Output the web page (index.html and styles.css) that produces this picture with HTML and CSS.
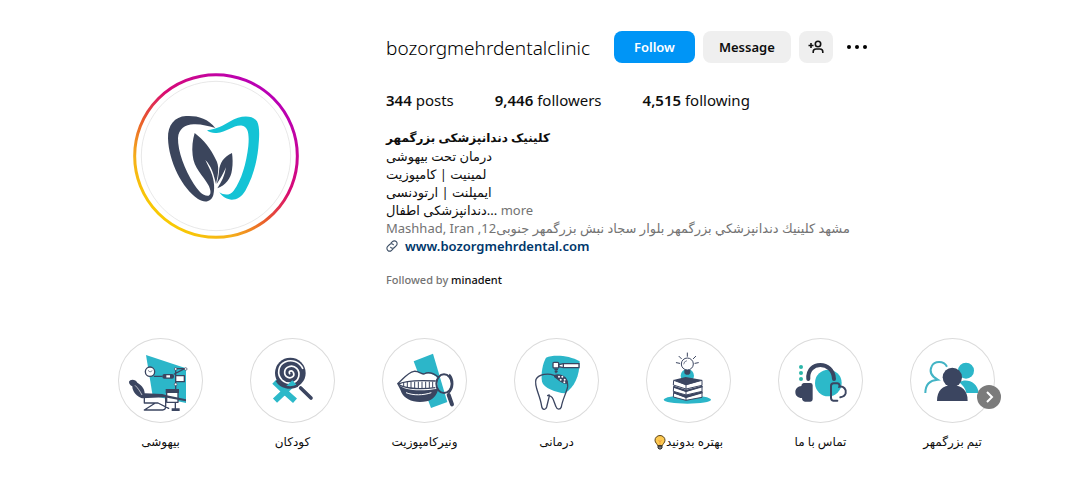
FILE: index.html
```html
<!DOCTYPE html>
<html lang="en">

<head>
	<meta charset="UTF-8">
	<meta name="viewport" content="width=device-width, initial-scale=1.0">
	<title>bozorgmehrdentalclinic</title>
	<link rel="stylesheet" href="styles.css">
</head>

<body>
	<main class="profile">
		<header class="profile__header">
			<div class="avatar">
				<svg class="avatar__image" viewBox="40 39 498 498" role="img" aria-label="Profile picture">
					<defs>
						<linearGradient id="ring" x1="0.15" y1="0.9" x2="0.8" y2="0.1">
							<stop offset="0" stop-color="#f9ce00"/>
							<stop offset="0.2" stop-color="#f5b01a"/>
							<stop offset="0.42" stop-color="#e8552e"/>
							<stop offset="0.62" stop-color="#d90b73"/>
							<stop offset="1" stop-color="#b900b4"/>
						</linearGradient>
					</defs>
					<circle cx="289" cy="288" r="244" fill="none" stroke="url(#ring)" stroke-width="9"/>
					<circle cx="289" cy="288" r="224" fill="none" stroke="#dcdcdc" stroke-width="2"/>
					<path fill="#3b455c" d="M287 204C265 174 230 166 199 168C165 170 144 195 145 235C147 305 188 386 235 417C255 430 275 426 281 405C287 380 282 350 269 325L257 300C275 318 282 342 289 372C296 340 300 318 288 298C274 266 252 240 225 219C219 240 216 262 219 286C222 325 250 346 266 375C274 390 275 404 267 407C251 410 235 391 222 371C195 329 174 273 175 234C177 207 196 194 222 193C245 192 264 198 287 204Z"/>
					<path fill="#3b455c" d="M337 279C313 289 300 310 298 333C297 348 294 360 291 372C302 357 311 341 319 322C316 344 306 366 293 385C317 376 334 356 337 329C340 311 339 294 337 279Z"/>
					<path fill="#14c3d5" d="M262 211C290 208 311 197 332 184C360 166 398 164 412 184C421 201 419 231 416 263C411 312 397 357 377 392C357 426 321 428 299 397C315 407 331 406 342 392C366 360 380 310 386 258C389 223 386 201 368 197C343 193 322 217 291 219C280 220 269 217 262 211Z"/>
				</svg>
			</div>

			<section class="info">
				<div class="info__top">
					<h1 class="username">bozorgmehrdentalclinic</h1>
					<div class="actions">
						<button type="button" class="btn btn--primary">Follow</button>
						<button type="button" class="btn">Message</button>
						<button type="button" class="btn btn--icon" aria-label="Similar accounts">
							<svg width="16" height="16" viewBox="0 0 16 16" fill="none" stroke="#111" stroke-width="1.6">
								<path d="M0.5 6.5H5.5M3 4V9"/>
								<circle cx="10" cy="5" r="2.7"/>
								<path d="M5.2 14V12.8C5.2 11 6.4 10 8 10H12C13.6 10 14.8 11 14.8 12.8V14"/>
							</svg>
						</button>
					</div>
					<button type="button" class="more-options" aria-label="Options">
						<svg width="20" height="20" viewBox="0 0 20 20" fill="#000">
							<circle cx="2" cy="10" r="2"/>
							<circle cx="10" cy="10" r="2"/>
							<circle cx="18" cy="10" r="2"/>
						</svg>
					</button>
				</div>

				<ul class="stats">
					<li><b>344</b> posts</li>
					<li><b>9,446</b> followers</li>
					<li><b>4,515</b> following</li>
				</ul>

				<div class="bio">
					<h2 class="bio__name">کلینیک دندانپزشکی بزرگمهر</h2>
					<div>درمان تحت بیهوشی</div>
					<div>لمینیت | کامپوزیت</div>
					<div>ایمپلنت | ارتودنسی</div>
					<div><bdi dir="rtl">دندانپزشکی اطفال</bdi>... <button type="button" class="bio__more">more</button></div>
					<div class="bio__address">Mashhad, Iran ,<bdi dir="rtl">مشهد كلينيك دندانپزشكي بزرگمهر بلوار سجاد نبش بزرگمهر جنوبی12</bdi></div>
					<a class="bio__link" href="#">
						<svg width="12" height="12" viewBox="0 0 12 12" fill="none" stroke="#3d4f66" stroke-width="1.1" stroke-linecap="round">
							<path d="M4.9 3.2L6.4 1.7A2.5 2.5 0 0 1 10.3 5.6L8.4 7.5A2.5 2.5 0 0 1 4.7 7.3"/>
							<path d="M7.1 8.8L5.6 10.3A2.5 2.5 0 0 1 1.7 6.4L3.6 4.5A2.5 2.5 0 0 1 7.3 4.7"/>
						</svg>
						www.bozorgmehrdental.com
					</a>
				</div>

				<p class="followed">Followed by <a href="#">minadent</a></p>
			</section>
		</header>

		<section class="highlights">
			<a class="highlight" href="#">
				<svg class="highlight__cover" viewBox="24 24 255 255">
					<path fill="#2cb6c9" d="M108 75L228 115V219L128 197Z"/>
					<circle cx="120" cy="125" r="14" fill="#fff" stroke="#3b4560" stroke-width="4"/>
					<path d="M114 121L120 126L127 122" fill="none" stroke="#3b4560" stroke-width="2"/>
					<g fill="none" stroke="#3b4560" stroke-width="4" stroke-linecap="round" stroke-linejoin="round">
						<path d="M197 177V116H224L193 132M133 139H156"/>
						<rect x="197" y="137" width="26" height="18" fill="#fff"/>
						<path d="M103 197V219H144L176 235M103 240L136 219M103 240H158Q166 240 167 231V198M196 218V238"/>
						<rect x="170" y="185" width="34" height="32" fill="#fff"/>
					</g>
					<rect x="157" y="132" width="35" height="14" rx="6" fill="#3b4560"/>
					<path d="M169 139H180" stroke="#fff" stroke-width="7"/>
					<g fill="#fff" stroke="#3b4560" stroke-width="2"><circle cx="197" cy="117" r="4"/><circle cx="227" cy="117" r="4"/><circle cx="197" cy="163" r="4"/></g>
					<path fill="#3b4560" d="M57 155C60 146 78 147 82 158C98 167 104 180 104 190L157 192L170 196L228 208V214L163 202L96 205C82 201 66 184 67 169C60 165 57 161 57 155ZM167 177H207V189H167ZM185 235H209V243H185Z"/>
					<path d="M75 166C84 174 90 184 96 195" stroke="#fff" stroke-width="2" fill="none"/>
				</svg>
				<span class="highlight__title">بیهوشی</span>
			</a>
			<a class="highlight" href="#">
				<svg class="highlight__cover" viewBox="30 24 255 255">
					<circle cx="151" cy="129" r="46" fill="#3b4560"/>
					<path d="M149 131C144 124 155 119 160 127C166 139 153 147 143 142C130 136 131 115 146 110C165 103 181 121 176 140C170 161 142 166 126 150C109 132 115 105 135 96C155 87 178 95 188 115" fill="none" stroke="#fff" stroke-width="5" stroke-linecap="round"/>
					<path d="M133 184L165 212M163 157L105 212" stroke="#2cb9c9" stroke-width="18"/>
					<path d="M103 155L140 190" stroke="#2cb9c9" stroke-width="18"/>
					<path d="M110 151C123 172 150 178 173 167" stroke="#3b4560" stroke-width="8" fill="none"/>
					<path d="M182 174L213 204" stroke="#3b4560" stroke-width="11" stroke-linecap="round"/>
				</svg>
				<span class="highlight__title">کودکان</span>
			</a>
			<a class="highlight" href="#">
				<svg class="highlight__cover" viewBox="36 24 255 255">
					<path fill="#2cb6c9" d="M131 94L189 71L232 216L183 234Z"/>
					<path fill="#fff" d="M82 162C99 149 111 128 132 124C145 122 153 132 162 132C174 127 193 132 202 145V181C170 187 114 187 82 162Z"/>
					<path fill="none" stroke="#3b4560" stroke-width="4" d="M82 162C99 149 111 128 132 124C145 122 153 132 162 132C174 125 191 130 205 141M84 163C105 151 160 151 197 153M84 163C110 178 160 178 196 173"/>
					<path stroke="#3b4560" stroke-width="3" d="M101 158V170M112 156V173M123 155V175M134 155V176M145 155V176M156 155V176M167 155V175M178 155V174M188 155V173"/>
					<path fill="#3b4560" d="M82 163C111 187 163 182 205 176C201 195 188 210 170 214C135 222 103 208 94 187C91 177 86 170 82 163Z"/>
					<path d="M108 188C130 197 160 196 184 188" fill="none" stroke="#fff" stroke-width="3"/>
					<ellipse cx="222" cy="161" rx="23" ry="28" fill="none" stroke="#3b4560" stroke-width="6"/>
					<path d="M237 134C251 149 250 176 235 188" fill="none" stroke="#3b4560" stroke-width="7"/>
					<path d="M236 195L246 223" stroke="#3b4560" stroke-width="12" stroke-linecap="round"/>
				</svg>
				<span class="highlight__title">ونیرکامپوزیت</span>
			</a>
			<a class="highlight" href="#">
				<svg class="highlight__cover" viewBox="36 24 255 255">
					<path fill="#2cb6c9" d="M132 83C155 73 202 76 233 94C233 137 217 173 189 190C162 187 124 174 120 155C116 130 122 101 132 83Z"/>
					<path fill="none" stroke="#3b4560" stroke-width="4" stroke-linecap="round" stroke-linejoin="round" d="M156 136C139 129 111 132 102 148C95 169 114 193 119 229C121 240 131 241 134 231L141 202C144 190 139 196 137 197M140 197C153 198 154 211 162 230C165 240 175 239 178 231C181 209 193 190 197 170C198 160 194 151 188 143"/>
					<path fill="#3b4560" d="M156 135C176 127 197 141 198 158C190 168 174 155 156 141Z"/>
					<g fill="#fff"><circle cx="171" cy="140" r="3"/><circle cx="181" cy="140" r="3"/><circle cx="188" cy="149" r="3"/><circle cx="176" cy="149" r="3"/><circle cx="187" cy="157" r="3"/></g>
					<g fill="#fff" stroke="#3b4560" stroke-width="4"><rect x="153" y="97" width="17" height="17" rx="3"/><path d="M171 104L184 101H231V113H184L171 110Z"/></g>
					<path stroke="#3b4560" stroke-width="4" d="M162 116V130M157 119H168M158 125H167M184 101V113"/>
				</svg>
				<span class="highlight__title">درمانی</span>
			</a>
			<a class="highlight" href="#">
				<svg class="highlight__cover" viewBox="36 24 255 255">
					<ellipse cx="160" cy="209" rx="71" ry="12" fill="#2cb6c9"/>
					<circle cx="160" cy="137" r="20" fill="#2cb6c9"/>
					<circle cx="160" cy="102" r="18" fill="#fff" stroke="#3b4560" stroke-width="3"/>
					<path d="M149 103A12 12 0 0 1 159 92" fill="none" stroke="#3b4560" stroke-width="2"/>
					<path fill="#3b4560" d="M151 120H169V130L164 134H156L151 130Z"/>
					<path stroke="#3b4560" stroke-width="3" stroke-linecap="round" d="M160 69V79M135 79L142 86M185 79L178 86M127 98L137 100M193 98L183 100"/>
					<path fill="#fff" stroke="#3b4560" stroke-width="3" stroke-linejoin="round" d="M119 188L156 202L204 187V202L156 211L118 201ZM119 170L156 184L204 169V184L156 195L118 184ZM119 151L156 164L204 151V166L156 177L118 165Z"/>
					<path fill="#3b4560" d="M118 150L155 141L206 150L156 166ZM118 167L156 179L206 167V172L156 186L118 173ZM118 184L156 196L206 184V190L156 204L118 190Z"/>
					<path stroke="#3b4560" stroke-width="3" d="M156 163V211"/>
				</svg>
				<span class="highlight__title" dir="rtl">بهتره بدونید<svg class="bulb" width="12" height="15" viewBox="0 0 12 15"><path d="M3.5 10.5C3.5 8.8 1 8 1 5.2A5 4.7 0 0 1 11 5.2C11 8 8.5 8.8 8.5 10.5Z" fill="#fdc950" stroke="#5b4216"/><path d="M4.5 5L6 7L7.5 5M6 7V10" fill="none" stroke="#f0a040"/><path d="M4 11H8V13L7 14H5L4 13Z" fill="#777" stroke="#333"/></svg></span>
			</a>
			<a class="highlight" href="#">
				<svg class="highlight__cover" viewBox="36 24 255 255">
					<circle cx="187" cy="159" r="40" fill="#2cb9c9"/>
					<g fill="#2cb6a9"><circle cx="105" cy="111" r="6"/><circle cx="105" cy="129" r="6"/><circle cx="105" cy="147" r="6"/></g>
					<path d="M127 147C122 91 202 91 204 147" fill="none" stroke="#3b4560" stroke-width="12" stroke-linecap="round"/>
					<path fill="#3b4560" d="M113 159H133Q140 159 140 166V208Q140 215 133 215H117Q108 214 108 204C95 204 88 197 88 186C88 176 96 169 106 168Q106 160 113 159Z"/>
					<path d="M214 212H202Q195 211 195 203V168Q195 160 203 160H214Q222 161 220 170C233 168 242 178 239 190Q236 200 223 202" fill="none" stroke="#3b4560" stroke-width="6" stroke-linecap="round"/>
				</svg>
				<span class="highlight__title">تماس با ما</span>
			</a>
			<a class="highlight" href="#">
				<svg class="highlight__cover" viewBox="36 24 255 255">
					<path d="M147 110C137 91 109 92 101 109C94 123 100 138 119 149C94 151 82 166 82 189" fill="none" stroke="#43b4c5" stroke-width="6"/>
					<circle cx="204" cy="122" r="24" fill="#2cb6c9"/>
					<path fill="#2cb6c9" d="M184 157C204 143 240 156 242 189H205C202 175 195 167 184 157Z"/>
					<circle cx="163" cy="142" r="29" fill="#3b4560"/>
					<path fill="#3b4560" d="M117 213C117 183 133 166 163 166C193 166 209 183 209 213Z"/>
				</svg>
				<span class="highlight__title">تیم بزرگمهر</span>
			</a>
			<button type="button" class="next" aria-label="Next">
				<svg width="12" height="12" viewBox="0 0 12 12" fill="none" stroke="#fff" stroke-width="2">
					<path d="M4 1L9 6L4 11"/>
				</svg>
			</button>
		</section>
	</main>
</body>

</html>
```
FILE: styles.css
```css
* {
	box-sizing: border-box;
}

body {
	margin: 0;
	background: #fff;
	color: #0d0d0d;
	font: 14px/18px "Noto Sans", "DejaVu Sans", sans-serif;
}

h1,
h2,
p,
ul {
	margin: 0;
	padding: 0;
	font-size: inherit;
}

button {
	border: 0;
	padding: 0;
	background: none;
	color: inherit;
	font: inherit;
	cursor: pointer;
}

a {
	color: inherit;
	text-decoration: none;
}

svg {
	display: block;
}

.profile {
	max-width: 936px;
	margin: 0 auto;
	padding-top: 31px;
}

.profile__header {
	display: grid;
	grid-template-columns: 276px 1fr;
	gap: 32px;
}

.avatar {
	display: flex;
	justify-content: center;
	padding-top: 42px;
}

.avatar__image {
	width: 166px;
	height: 166px;
}

.info__top {
	display: flex;
	align-items: center;
	height: 32px;
}

.username {
	margin-right: 24px;
	padding-top: 2px;
	color: #000;
	font-size: 19px;
	font-weight: 300;
	line-height: 24px;
}

.actions {
	display: flex;
	gap: 8px;
}

.btn {
	height: 32px;
	padding: 0 16px;
	border-radius: 8px;
	background: #efefef;
	font-size: 13px;
	font-weight: 600;
}

.btn--primary {
	padding: 0 20px;
	background: #0095f6;
	color: #fff;
}

.btn--icon {
	padding: 0 9px;
}

.more-options {
	margin-left: 14px;
}

.stats {
	display: flex;
	gap: 41px;
	margin-top: 25px;
	font-size: 15px;
	line-height: 24px;
	list-style: none;
}

.stats b {
	font-weight: 600;
}

.bio {
	margin-top: 17px;
	font-size: 13px;
}

.bio__name {
	font-size: 12px;
	font-weight: 600;
}

.bio__more,
.bio__address {
	color: #737373;
}

.bio__link {
	display: flex;
	align-items: center;
	gap: 7px;
	color: #00376b;
	font-weight: 600;
}

.followed {
	margin-top: 16px;
	color: #737373;
	font-size: 11px;
	font-weight: 500;
}

.followed a {
	color: #0d0d0d;
}

.highlights {
	position: relative;
	display: flex;
	gap: 47px;
	margin-top: 49px;
	padding-left: 40px;
}

.highlight {
	display: flex;
	flex-direction: column;
	align-items: center;
	gap: 10px;
	width: 85px;
}

.highlight__cover {
	width: 85px;
	height: 85px;
	border-radius: 50%;
	box-shadow: inset 0 0 0 1px #dbdbdb;
}

.highlight__title {
	display: flex;
	align-items: center;
	font-size: 12px;
	font-weight: 500;
	white-space: nowrap;
}

.next {
	position: absolute;
	top: 47px;
	right: 13px;
	display: flex;
	align-items: center;
	justify-content: center;
	width: 24px;
	height: 24px;
	border-radius: 50%;
	background: #7b7b7b;
}
```
